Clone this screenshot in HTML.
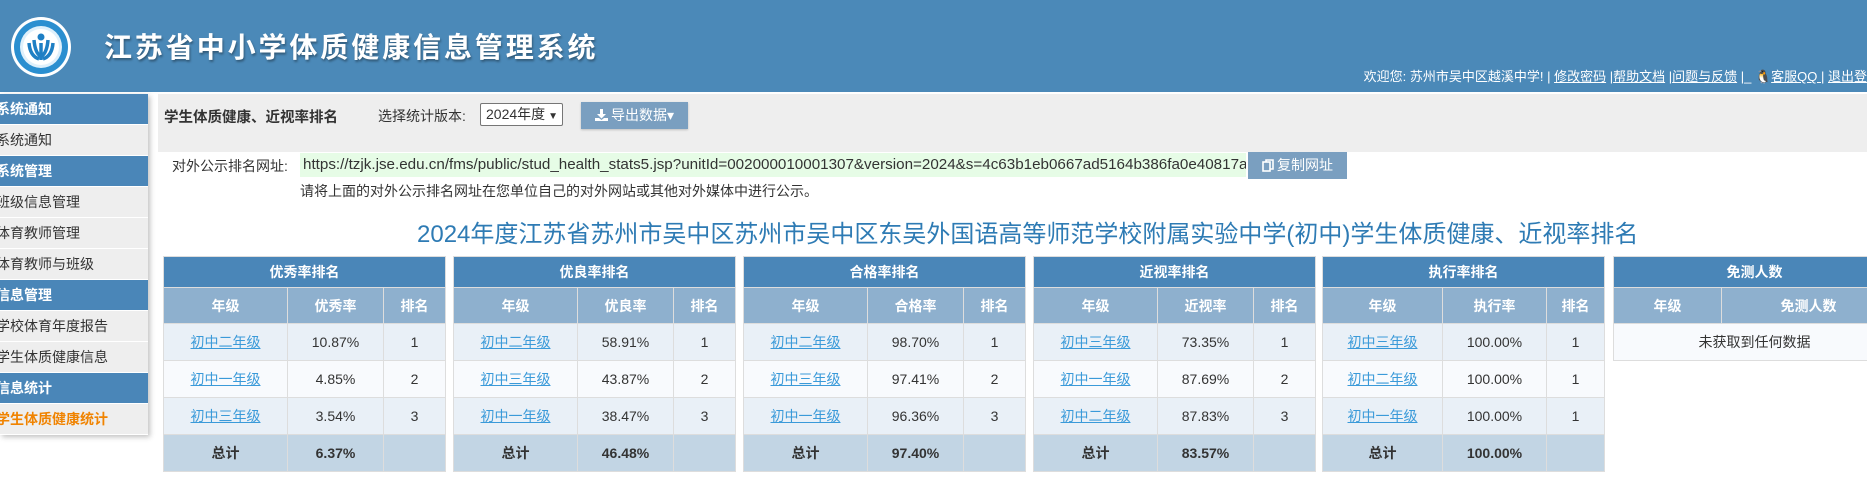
<!DOCTYPE html>
<html><head><meta charset="utf-8">
<style>
*{margin:0;padding:0;box-sizing:border-box}
body{width:1867px;height:487px;overflow:hidden;background:#fff;font-family:"Liberation Sans","Noto Sans CJK SC",sans-serif;font-size:14px;color:#333;position:relative}
.abs{position:absolute}
#hd{left:0;top:0;width:1867px;height:92px;background:#4b89b8}
#title{left:104px;top:26px;color:#fff;font-size:28px;letter-spacing:2.9px;font-weight:bold;text-shadow:1px 2px 2px rgba(0,0,0,.35);white-space:nowrap}
#welcome{right:0;top:66px;color:#fff;font-size:13px;white-space:nowrap}
#welcome u{text-decoration:underline}
#side{left:0;top:94px;width:148px;box-shadow:2px 2px 5px rgba(0,0,0,.25);background:#eee}
#side div{height:31px;line-height:30px;border-bottom:1px solid #fff;white-space:nowrap;overflow:hidden;font-size:14px;margin-left:-4px;padding-left:0}
#side .h{background:#4a86b8;color:#fff;font-weight:bold}
#side .o{color:#f08300;font-weight:bold}
#tb{left:158px;top:94px;width:1709px;height:58px;background:#eee}
.btn{background:#7a9fc0;color:#fff;font-size:14px;text-align:center;box-shadow:0 1px 2px rgba(0,0,0,.2)}
table{border-collapse:collapse;position:absolute;top:256px;width:283px;table-layout:fixed}
td,th{border:1px solid #ddd;text-align:center;font-size:14px;white-space:nowrap;overflow:hidden}
th.t{background:#4a86b8;color:#fff;height:31px}
th.s{background:#8eb0ce;color:#fff;height:36px}
tr.a td{background:#e9f0f7;height:37px}
tr.b td{background:#f8fafd;height:37px}
tr.c td{background:#c2d5e4;height:37px;font-weight:bold}
a{color:#3a9ad9;text-decoration:underline}
</style></head><body>
<div id="hd" class="abs"></div>
<svg class="abs" style="left:10px;top:16px" width="62" height="62" viewBox="0 0 62 62">
<circle cx="31" cy="31" r="30" fill="#fff"/>
<circle cx="31" cy="31" r="27" fill="#2b8fd0"/>
<circle cx="31" cy="31" r="21" fill="#dff0fb"/>
<circle cx="31" cy="31" r="18" fill="#fff"/>
<circle cx="31" cy="21" r="3.5" fill="#1e7fc4"/>
<path d="M31 27 L31 44 M19 27 Q20 40 29 43 M43 27 Q42 40 33 43 M24 24 Q25 36 30 40 M38 24 Q37 36 32 40" stroke="#1e7fc4" stroke-width="3.5" fill="none"/>
</svg>
<div id="title" class="abs">江苏省中小学体质健康信息管理系统</div>
<div id="welcome" class="abs">欢迎您: 苏州市吴中区越溪中学! | <u>修改密码</u> |<u>帮助文档</u> |<u>问题与反馈</u> |_ 🐧<u>客服QQ </u>| <u>退出登</u></div>

<div id="side" class="abs">
<div class="h">系统通知</div><div>系统通知</div>
<div class="h">系统管理</div><div>班级信息管理</div><div>体育教师管理</div><div>体育教师与班级</div>
<div class="h">信息管理</div><div>学校体育年度报告</div><div>学生体质健康信息</div>
<div class="h">信息统计</div><div class="o">学生体质健康统计</div>
</div>

<div id="tb" class="abs"></div>
<div class="abs" style="left:164px;top:106px;font-weight:bold;font-size:14.5px">学生体质健康、近视率排名</div>
<div class="abs" style="left:378px;top:106px;font-size:14px">选择统计版本:</div>
<div class="abs" style="left:480px;top:103px;width:83px;height:23px;border:1px solid #767676;background:#fff;border-radius:2px;font-size:14px;line-height:21px;padding-left:5px">2024年度<span style="font-size:10px;margin-left:3px">▼</span></div>
<div class="abs btn" style="left:581px;top:102px;width:107px;height:27px;line-height:27px"><svg width="13" height="12" viewBox="0 0 13 12" style="vertical-align:-1px;margin-right:3px"><path d="M5 0h3v5h3l-4.5 4.5L2 5h3z M0 9h4l2.5 2 2.5-2h4v3H0z" fill="#fff"/></svg>导出数据▾</div>

<div class="abs" style="left:172px;top:156px;font-size:14px">对外公示排名网址:</div>
<div class="abs" style="left:300px;top:153px;width:946px;height:24px;background:#e6fce6;font-size:15.2px;line-height:24px;padding-left:3px;white-space:nowrap;overflow:hidden">https://tzjk.jse.edu.cn/fms/public/stud_health_stats5.jsp?unitId=002000010001307&amp;version=2024&amp;s=4c63b1eb0667ad5164b386fa0e40817a</div>
<div class="abs btn" style="left:1248px;top:152px;width:99px;height:27px;line-height:27px;box-shadow:none"><svg width="12" height="13" viewBox="0 0 12 13" style="vertical-align:-2px;margin-right:3px"><rect x="1" y="3" width="7" height="9" fill="none" stroke="#fff" stroke-width="1.6"/><path d="M4 3V1h7v9H8" fill="none" stroke="#fff" stroke-width="1.6"/></svg>复制网址</div>
<div class="abs" style="left:300px;top:181px;font-size:14px">请将上面的对外公示排名网址在您单位自己的对外网站或其他对外媒体中进行公示。</div>

<div class="abs" style="left:417px;top:214px;width:1218px;text-align:center;font-size:24px;color:#2e7bb4;white-space:nowrap">2024年度江苏省苏州市吴中区苏州市吴中区东吴外国语高等师范学校附属实验中学(初中)学生体质健康、近视率排名</div>

<table style="left:163px"><colgroup><col style="width:124px"><col style="width:96px"><col></colgroup>
<tr><th class="t" colspan="3">优秀率排名</th></tr><tr><th class="s">年级</th><th class="s">优秀率</th><th class="s">排名</th></tr>
<tr class="a"><td><a>初中二年级</a></td><td>10.87%</td><td>1</td></tr>
<tr class="b"><td><a>初中一年级</a></td><td>4.85%</td><td>2</td></tr>
<tr class="a"><td><a>初中三年级</a></td><td>3.54%</td><td>3</td></tr>
<tr class="c"><td>总计</td><td>6.37%</td><td></td></tr></table>

<table style="left:453px"><colgroup><col style="width:124px"><col style="width:96px"><col></colgroup>
<tr><th class="t" colspan="3">优良率排名</th></tr><tr><th class="s">年级</th><th class="s">优良率</th><th class="s">排名</th></tr>
<tr class="a"><td><a>初中二年级</a></td><td>58.91%</td><td>1</td></tr>
<tr class="b"><td><a>初中三年级</a></td><td>43.87%</td><td>2</td></tr>
<tr class="a"><td><a>初中一年级</a></td><td>38.47%</td><td>3</td></tr>
<tr class="c"><td>总计</td><td>46.48%</td><td></td></tr></table>

<table style="left:743px"><colgroup><col style="width:124px"><col style="width:96px"><col></colgroup>
<tr><th class="t" colspan="3">合格率排名</th></tr><tr><th class="s">年级</th><th class="s">合格率</th><th class="s">排名</th></tr>
<tr class="a"><td><a>初中二年级</a></td><td>98.70%</td><td>1</td></tr>
<tr class="b"><td><a>初中三年级</a></td><td>97.41%</td><td>2</td></tr>
<tr class="a"><td><a>初中一年级</a></td><td>96.36%</td><td>3</td></tr>
<tr class="c"><td>总计</td><td>97.40%</td><td></td></tr></table>

<table style="left:1033px"><colgroup><col style="width:124px"><col style="width:96px"><col></colgroup>
<tr><th class="t" colspan="3">近视率排名</th></tr><tr><th class="s">年级</th><th class="s">近视率</th><th class="s">排名</th></tr>
<tr class="a"><td><a>初中三年级</a></td><td>73.35%</td><td>1</td></tr>
<tr class="b"><td><a>初中一年级</a></td><td>87.69%</td><td>2</td></tr>
<tr class="a"><td><a>初中二年级</a></td><td>87.83%</td><td>3</td></tr>
<tr class="c"><td>总计</td><td>83.57%</td><td></td></tr></table>

<table style="left:1322px"><colgroup><col style="width:120px"><col style="width:104px"><col></colgroup>
<tr><th class="t" colspan="3">执行率排名</th></tr><tr><th class="s">年级</th><th class="s">执行率</th><th class="s">排名</th></tr>
<tr class="a"><td><a>初中三年级</a></td><td>100.00%</td><td>1</td></tr>
<tr class="b"><td><a>初中二年级</a></td><td>100.00%</td><td>1</td></tr>
<tr class="a"><td><a>初中一年级</a></td><td>100.00%</td><td>1</td></tr>
<tr class="c"><td>总计</td><td>100.00%</td><td></td></tr></table>

<table style="left:1613px"><colgroup><col style="width:108px"><col></colgroup>
<tr><th class="t" colspan="2">免测人数</th></tr><tr><th class="s">年级</th><th class="s">免测人数</th></tr>
<tr class="b"><td colspan="2">未获取到任何数据</td></tr></table>
</body></html>
